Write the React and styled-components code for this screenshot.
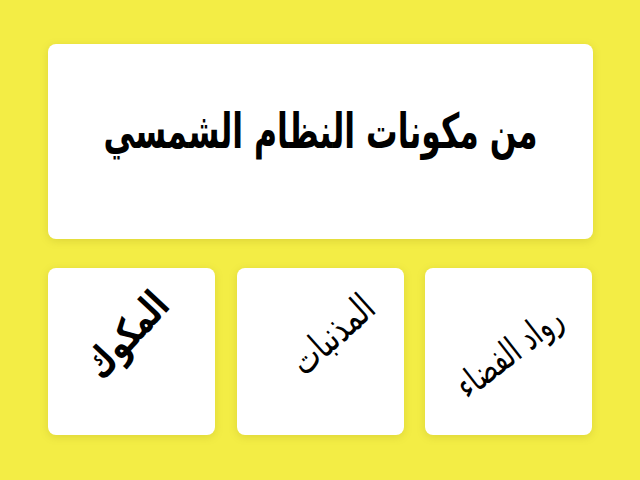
import styled, { createGlobalStyle } from 'styled-components';

const GlobalStyle = createGlobalStyle`
    html, body {
        margin: 0;
        padding: 0;
        background: #f3ed45;
    }
    body {
        font-family: "DejaVu Sans Condensed", "DejaVu Sans", sans-serif;
    }
`;

const answers = [
    { id: 1, text: 'المكوك', bold: true, size: 32, angle: -47, dx: -5, dy: -17 },
    { id: 2, text: 'المذنبات', bold: false, size: 31, angle: -42, dx: 12, dy: -18 },
    { id: 3, text: 'رواد الفضاء', bold: false, size: 29, angle: -38, dx: 0, dy: 0 },
];

const App = () => {
    return (
        <>
            <GlobalStyle />
            <Page>
                <Question>
                    <QuestionText dir="rtl">من مكونات النظام الشمسي</QuestionText>
                </Question>
                <Answers>
                    {answers.map(a => (
                        <Card key={a.id}>
                            <AnswerText
                                dir="rtl"
                                $bold={a.bold}
                                $size={a.size}
                                $angle={a.angle}
                                $dx={a.dx}
                                $dy={a.dy}
                            >
                                {a.text}
                            </AnswerText>
                        </Card>
                    ))}
                </Answers>
            </Page>
        </>
    );
};

export default App;

const Page = styled.div`
    width: 640px;
    height: 480px;
    box-sizing: border-box;
    padding: 44px 47px 0 48px;
    display: flex;
    flex-direction: column;
    row-gap: 29px;
`;

const Question = styled.div`
    height: 195px;
    background: white;
    border-radius: 8px;
    box-shadow: 0 2px 8px rgba(120, 110, 0, 0.18);
    display: flex;
    align-items: center;
    justify-content: center;
`;

const QuestionText = styled.h1`
    margin: 0 0 22px;
    font-size: 35px;
    font-weight: bold;
    color: #000;
    transform: scaleY(1.38);
`;

const Answers = styled.div`
    display: grid;
    grid-template-columns: repeat(3, 167px);
    column-gap: 21.5px;
`;

const Card = styled.div`
    height: 167px;
    background: white;
    border-radius: 8px;
    box-shadow: 0 2px 8px rgba(120, 110, 0, 0.18);
    display: flex;
    align-items: center;
    justify-content: center;
    overflow: hidden;
`;

const AnswerText = styled.div`
    font-size: ${p => p.$size}px;
    font-weight: ${p => (p.$bold ? 'bold' : 'normal')};
    transform: translate(${p => p.$dx}px, ${p => p.$dy}px) rotate(${p => p.$angle}deg) scaleY(1.25);
    color: #000;
    white-space: nowrap;
`;
